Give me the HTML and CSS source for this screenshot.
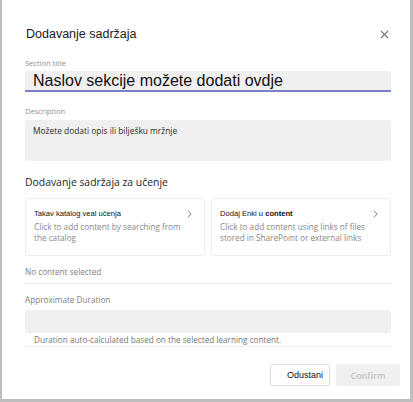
FILE: index.html
```html
<!DOCTYPE html>
<html lang="hr">

<head>
    <meta charset="UTF-8">
    <meta name="viewport" content="width=device-width, initial-scale=1.0">
    <title>Dodavanje sadržaja</title>
    <link rel="stylesheet" href="styles.css">
</head>

<body>
    <div class="dialog">
        <!-- zaglavlje -->
        <div class="dialog-header">
            <span class="dialog-title">Dodavanje sadržaja</span>
            <a href="javascript:;" class="close-btn">
                <svg width="9" height="9" viewBox="0 0 9 9">
                    <path d="M1 1 L8 8 M8 1 L1 8" stroke="#777" stroke-width="1.1" fill="none" />
                </svg>
            </a>
        </div>

        <div class="field-label">Section title</div>
        <div class="title-input">Naslov sekcije možete dodati ovdje</div>

        <div class="field-label label-desc">Description</div>
        <div class="desc-input">Možete dodati opis ili bilješku mržnje</div>

        <div class="section-heading">Dodavanje sadržaja za učenje</div>

        <div class="cards">
            <div class="card">
                <div class="card-title">Takav katalog veal učenja</div>
                <div class="card-text">Click to add content by searching from the catalog</div>
                <svg class="chevron" width="5" height="8" viewBox="0 0 5 8">
                    <path d="M0.8 0.6 L4.2 4 L0.8 7.4" stroke="#808080" stroke-width="1" fill="none" />
                </svg>
            </div>
            <div class="card">
                <div class="card-title">Dodaj Enki u <b>content</b></div>
                <div class="card-text">Click to add content using links of files stored in SharePoint or external links</div>
                <svg class="chevron" width="5" height="8" viewBox="0 0 5 8">
                    <path d="M0.8 0.6 L4.2 4 L0.8 7.4" stroke="#808080" stroke-width="1" fill="none" />
                </svg>
            </div>
        </div>

        <div class="no-content">No content selected</div>

        <div class="field-label label-duration">Approximate Duration</div>
        <div class="duration-input"></div>
        <div class="duration-hint">Duration auto-calculated based on the selected learning content.</div>

        <!-- gumbi -->
        <div class="dialog-footer">
            <a href="javascript:;" class="btn btn-cancel">Odustani</a>
            <a href="javascript:;" class="btn btn-confirm">Confirm</a>
        </div>
    </div>
</body>

</html>
```

FILE: styles.css
```css
body {
    margin: 0;
    background-color: #fff;
}

a {
    text-decoration: none;
    color: #000;
}

.dialog {
    box-sizing: border-box;
    width: 413px;
    height: 402px;
    padding: 0 19px 0 23px;
    border-left: 2px solid #bdbdbd;
    border-right: 3px solid #bdbdbd;
    border-bottom: 3px solid #bdbdbd;
    background-color: #fff;
    font-family: "Open Sans", "Noto Sans", sans-serif;
    color: #242424;
}

.dialog-header {
    display: flex;
    justify-content: space-between;
    align-items: center;
    height: 20px;
    padding-top: 24px;
}

.dialog-title {
    font-family: "Liberation Sans", Arial, sans-serif;
    font-size: 12.5px;
    color: #1a1a1a;
    padding-left: 1px;
}

.close-btn {
    display: flex;
    margin-right: 2px;
}

.field-label {
    margin-top: 14px;
    font-size: 7.5px;
    line-height: 10px;
    color: #8f8f8f;
}

.title-input {
    box-sizing: border-box;
    height: 21px;
    margin-top: 3px;
    padding-left: 8px;
    background-color: #f0f0f0;
    border-bottom: 2px solid #7b7fc9;
    border-radius: 2px 2px 0 0;
    font-family: "Liberation Sans", Arial, sans-serif;
    font-size: 16px;
    line-height: 20px;
    color: #111;
}

.label-desc {
    margin-top: 14px;
}

.desc-input {
    box-sizing: border-box;
    height: 41px;
    margin-top: 4px;
    padding: 5px 8px;
    background-color: #f0f0f0;
    border-radius: 3px;
    font-size: 8.4px;
    line-height: 12px;
    color: #2b2b2b;
}

.section-heading {
    margin-top: 14px;
    font-size: 10.4px;
    line-height: 14px;
    color: #242424;
}

.cards {
    display: grid;
    grid-template-columns: 1fr 1fr;
    gap: 6px;
    margin-top: 9px;
}

.card {
    position: relative;
    box-sizing: border-box;
    height: 58px;
    padding: 10px 12px 0 8px;
    border: 1px solid #ececec;
    border-radius: 3px;
}

.card-title {
    font-family: "Liberation Sans", Arial, sans-serif;
    font-size: 7.6px;
    line-height: 10px;
    color: #111;
}

.card-text {
    margin-top: 2px;
    font-size: 8.2px;
    line-height: 11px;
    color: #888;
}

.chevron {
    position: absolute;
    top: 11px;
    right: 12px;
}

.no-content {
    margin-top: 10px;
    padding-bottom: 5px;
    border-bottom: 1px solid #ececec;
    font-size: 8.2px;
    line-height: 12px;
    color: #808080;
}

.label-duration {
    margin-top: 10px;
    font-size: 8.2px;
    line-height: 12px;
    color: #808080;
}

.duration-input {
    height: 23px;
    margin-top: 4px;
    background-color: #f0f0f0;
    border-radius: 3px;
}

.duration-hint {
    padding: 1px 0 1px 9px;
    border-bottom: 1px solid #f0f0f0;
    font-size: 8.2px;
    line-height: 11px;
    color: #777;
}

.dialog-footer {
    display: flex;
    justify-content: flex-end;
    gap: 6px;
    margin-top: 17px;
    margin-right: -9px;
}

.btn {
    box-sizing: border-box;
    display: flex;
    align-items: center;
    justify-content: center;
    height: 22px;
    border-radius: 3px;
    font-size: 9px;
}

.btn-cancel {
    width: 60px;
    padding-left: 10px;
    border: 1px solid #dcdcdc;
    font-family: "Liberation Sans", Arial, sans-serif;
    color: #111;
}

.btn-confirm {
    width: 64px;
    background-color: #f0f0f0;
    color: #c4c4c4;
    font-weight: 600;
}
```
